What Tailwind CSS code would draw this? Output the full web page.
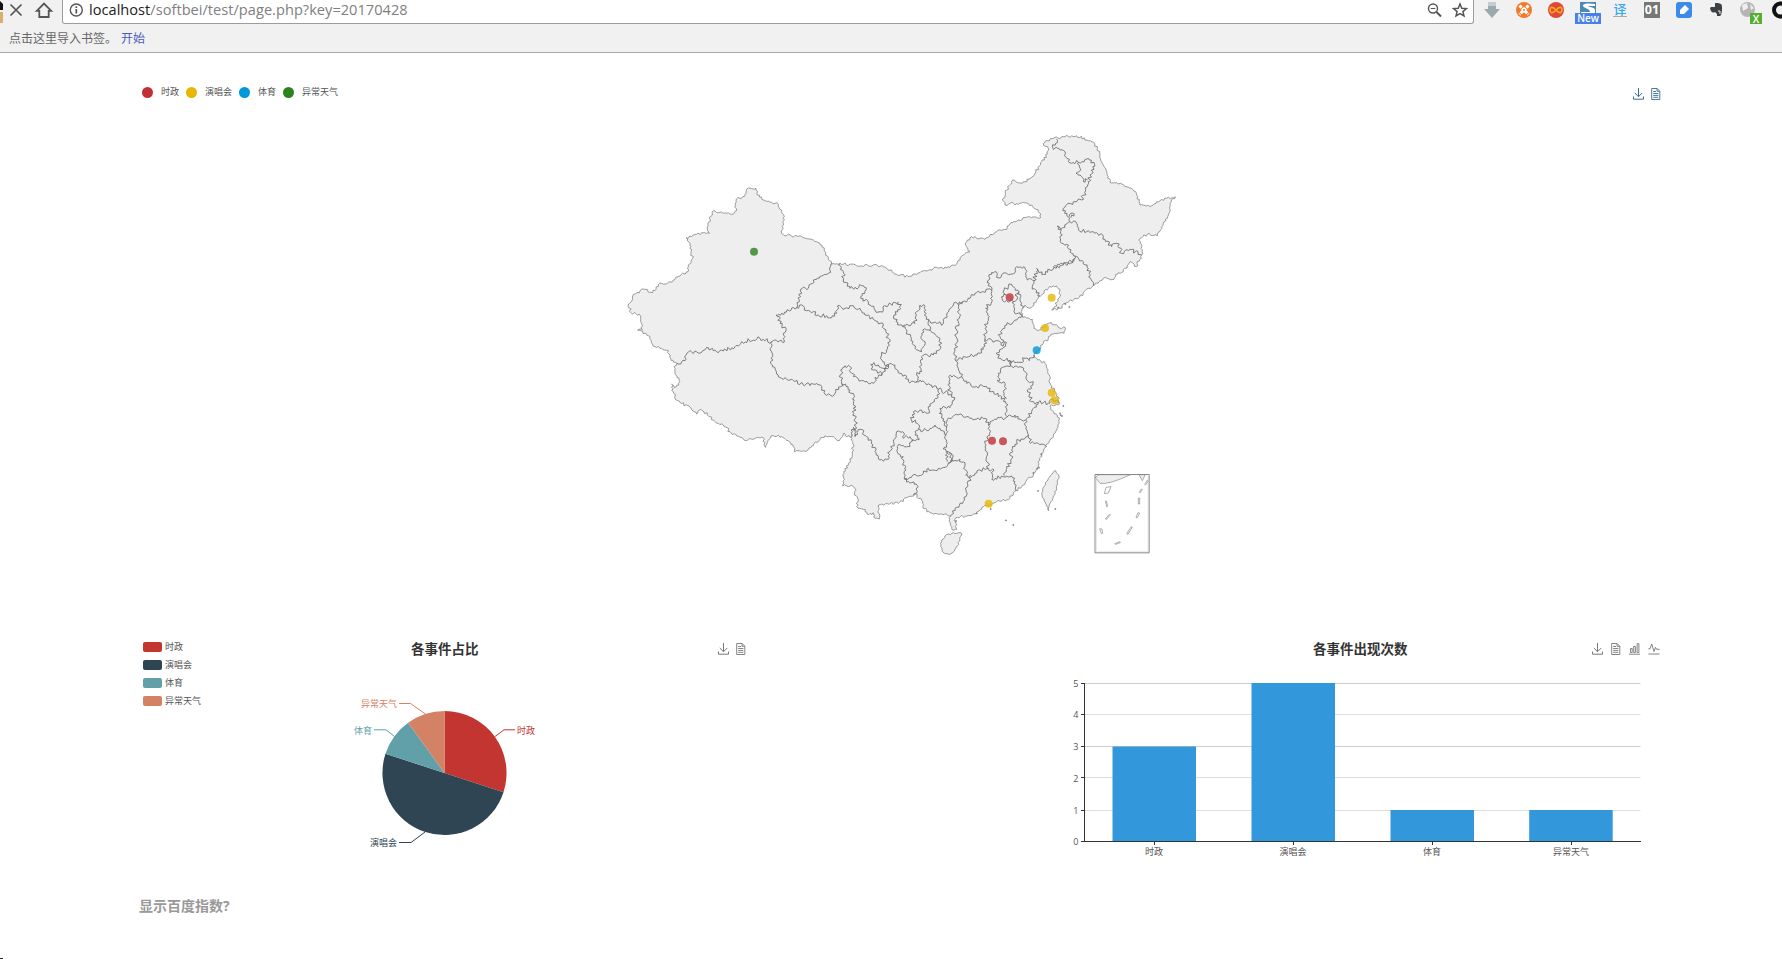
<!DOCTYPE html>
<html lang="zh">
<head>
<meta charset="utf-8">
<title>page.php</title>
<script src="https://cdn.jsdelivr.net/npm/@tailwindcss/browser@4"></script>
</head>
<body class="relative h-[959px] w-[1782px] overflow-hidden bg-white font-['Open_Sans','Noto_Sans_CJK_SC',sans-serif] text-[#333]">
<svg width="0" height="0" class="absolute">
  <defs>
    <symbol id="save" viewBox="0 0 11 12"><path d="M5.500 0V8.500M1.800 5L5.500 8.700L9.200 5M.5 8.500V11.200H10.500V8.500" fill="none" stroke="currentColor"/></symbol>
    <symbol id="doc" viewBox="0 0 10 12"><path d="M.7 .5H6.200L8.800 3.200V11.500H.7ZM6 .7V3.300H8.700M2.200 3.500H5M2.200 5.500H7.400M2.200 7.400H7.400M2.200 9.300H7.400" fill="none" stroke="currentColor" stroke-width=".9"/></symbol>
    <symbol id="bars" viewBox="0 0 11 12"><path d="M1.500 9.500V5.500H3.200V9.500ZM4.700 9.500V3.500H6.400V9.500ZM8.100 9.500V.7H9.900V9.500ZM0 11.200H11" fill="none" stroke="currentColor" stroke-width=".9"/></symbol>
    <symbol id="pulse" viewBox="0 0 12 12"><path d="M.4 5.800H2L3.700 1L6 8.600L7.500 4.300L8.600 6.300H11.600M.4 11H11.600" fill="none" stroke="currentColor" stroke-width=".9"/></symbol>
  </defs>
</svg>

<header class="h-[53px] border-b border-[#aaa] bg-[#f1f1f1]">
  <div class="flex h-6 items-start">
    <svg width="62" height="24" viewBox="0 0 62 24" fill="none">
      <path d="M0 1L3 4V10H0Z" fill="#111"/><path d="M0 12H3V23H0Z" fill="#dcae6c"/>
      <path d="M10.500 4.500L21.500 15.500M21.500 4.500L10.500 15.500" stroke="#555" stroke-width="1.700"/>
      <path d="M36.800 10.800L44 3.500L51.200 10.800H48.700V17H39.300V10.800Z" stroke="#555" stroke-width="1.800"/>
    </svg>
    <div class="flex h-6 w-[1412px] items-start rounded-b-[3px] border-x border-b border-[#9c9c9c] bg-white">
      <svg class="ml-[6px] mt-[3px]" width="15" height="15" viewBox="0 0 15 15" fill="none" stroke="#555"><circle cx="7.300" cy="7" r="6" stroke-width="1.400"/><path d="M7.300 6V10.500M7.300 3.300V5" stroke-width="1.700"/></svg>
      <div class="ml-[5px] -mt-px h-5 whitespace-nowrap text-[14.6px] leading-5 tracking-[0.02px] text-[#808080]"><span class="text-[#222]">localhost</span>/softbei/test/page.php?key=20170428</div>
      <svg class="ml-auto mr-[2px]" width="46" height="20" viewBox="0 0 46 20" fill="none" stroke="#555">
        <circle cx="8" cy="8.500" r="4.500" stroke-width="1.400"/><path d="M11.500 12L16 16.500" stroke-width="2"/><path d="M5.700 8.500H10.300"/>
        <path d="M35 4L36.800 8.300L41.400 8.600L37.900 11.600L39 16L35 13.600L31 16L32.100 11.600L28.600 8.600L33.200 8.300Z" stroke-width="1.500"/>
      </svg>
    </div>
    <svg width="308" height="24" viewBox="1474 0 308 24">
      <path d="M1488 2H1496V9H1500L1492 18L1484 9H1488Z" fill="#9aabb0"/><path d="M1488 2H1496V6H1488Z" fill="#c4ced1"/>
      <circle cx="1524" cy="10" r="8" fill="#f27a2c"/><path d="M1519.500 5.500L1528.500 14.500M1528.500 5.500L1519.500 14.500" stroke="#fff" stroke-width="3" stroke-dasharray="3 1"/><circle cx="1524" cy="10" r="2.500" fill="#fff"/><circle cx="1524" cy="10" r="1" fill="#f27a2c"/>
      <circle cx="1556" cy="10" r="8" fill="#de4838"/><path d="M1556 10C1552 5.500 1550 7.500 1550 10S1552 14.500 1556 10S1562 7.500 1562 10S1560 14.500 1556 10Z" fill="none" stroke="#fba71e" stroke-width="1.700"/>
      <rect x="1580" y="2" width="16" height="12" fill="#4b8ab5"/><path d="M1595 4C1590 3 1583 3 1583 5.500C1583 8.500 1590 8 1590 12H1581V13H1595V10C1595 7 1588 7 1588 6H1595Z" fill="#fff"/>
      <rect x="1575" y="13" width="26" height="11" fill="#4681e8"/><text x="1588" y="22.300" text-anchor="middle" font-size="10" font-weight="600" fill="#fff">New</text>
      <text x="1620" y="14" text-anchor="middle" font-size="13" font-weight="500" fill="#37a7f0">译</text><path d="M1613 16.500H1627" stroke="#aaa"/>
      <rect x="1644" y="2" width="16" height="16" fill="#777"/><text x="1652" y="14" text-anchor="middle" font-size="12.500" font-weight="700" fill="#fff">01</text>
      <rect x="1676" y="2" width="16" height="16" rx="3" fill="#3b8bea"/><path d="M1680 14V10L1685 5L1689 9L1684 14Z" fill="#fff"/>
      <path d="M1714 4L1710 8C1711 13 1713 13 1715 12L1717 14V16H1720C1722 16 1723 5 1721 4L1718 3H1715V7H1711" fill="#3c4144"/><path d="M1718 11H1720V14" stroke="#eee" fill="none"/>
      <circle cx="1747.500" cy="9.500" r="7.500" fill="#b5b5b5"/><path d="M1742 5L1747 3L1748 8L1743 11ZM1750 4L1754 8L1751 10Z" fill="#eee"/>
      <rect x="1750" y="13" width="12" height="11" fill="#55ae32"/><text x="1756" y="22.500" text-anchor="middle" font-size="10.500" font-weight="600" fill="#fff">X</text>
      <circle cx="1780.500" cy="10" r="6.500" fill="none" stroke="#111" stroke-width="4"/>
    </svg>
  </div>
  <div class="flex h-7 items-center gap-[9px] pl-[9px] pt-[2px] text-[12px] leading-4 text-[#666]"><span class="w-[103px] whitespace-nowrap">点击这里导入书签。</span><span class="text-[#4a5dc0]">开始</span></div>
</header>

<main class="px-[139px]">
  <section class="h-[560px]">
    <div class="flex h-[60px] items-start justify-between pl-[3px] pt-8">
      <ul class="flex items-center text-[9px] leading-[14px] text-[#555]">
        <li class="flex w-[44px] items-center gap-[8px]"><i class="size-[11px] rounded-full bg-[#c12e34]"></i>时政</li>
        <li class="flex w-[53px] items-center gap-[8px]"><i class="size-[11px] rounded-full bg-[#e6b600]"></i>演唱会</li>
        <li class="flex w-[44px] items-center gap-[8px]"><i class="size-[11px] rounded-full bg-[#0098d9]"></i>体育</li>
        <li class="flex items-center gap-[8px]"><i class="size-[11px] rounded-full bg-[#2b821d]"></i>异常天气</li>
      </ul>
      <div class="mr-[-18px] mt-[3px] flex gap-[7px] text-[#3c6a91]"><svg width="11" height="12"><use href="#save"/></svg><svg width="10" height="12"><use href="#doc"/></svg></div>
    </div>
    <svg id="map" class="ml-[481px] block" width="560" height="460" viewBox="1860 339 1680 1380" stroke-linejoin="round"></svg>
  </section>

  <section class="flex h-[262px] justify-between">
    <div class="flex w-[610px]">
      <ul class="flex flex-col gap-[4px] pl-[4px] pt-[27px] text-[9px] leading-[14px] text-[#555]">
        <li class="flex items-center gap-[3px]"><i class="h-[10px] w-[19px] rounded-[2px] bg-[#c23531]"></i>时政</li>
        <li class="flex items-center gap-[3px]"><i class="h-[10px] w-[19px] rounded-[2px] bg-[#2f4554]"></i>演唱会</li>
        <li class="flex items-center gap-[3px]"><i class="h-[10px] w-[19px] rounded-[2px] bg-[#61a0a8]"></i>体育</li>
        <li class="flex items-center gap-[3px]"><i class="h-[10px] w-[19px] rounded-[2px] bg-[#d48265]"></i>异常天气</li>
      </ul>
      <div class="ml-auto w-[409px]">
        <div class="flex h-[67px] items-start pl-[71px] pt-[26px]">
          <h2 class="w-[245px] text-[13.5px] font-bold leading-5">各事件占比</h2>
          <div class="mt-[4px] ml-auto mr-[3px] flex gap-[7px] text-[#777]"><svg width="11" height="12"><use href="#save"/></svg><svg width="10" height="12"><use href="#doc"/></svg></div>
        </div>
        <svg class="block" width="409" height="180" viewBox="340 680 409 180" font-size="9">
          <path d="M444.500 773V711A62 62 0 0 1 503.500 792.200Z" fill="#c23531"/>
          <path d="M444.500 773L503.500 792.200A62 62 0 1 1 385.500 753.800Z" fill="#2f4554"/>
          <path d="M444.500 773L385.500 753.800A62 62 0 0 1 408.100 722.800Z" fill="#61a0a8"/>
          <path d="M444.500 773L408.100 722.800A62 62 0 0 1 444.500 711Z" fill="#d48265"/>
          <g fill="none"><path d="M495 736.500L504 729.800H515" stroke="#c23531"/><path d="M425 832L411 842.500H399" stroke="#2f4554"/><path d="M394.500 736.500L386 729.800H374" stroke="#61a0a8"/><path d="M425.500 714L410.500 703.500H399" stroke="#d48265"/></g>
          <text x="517" y="734" fill="#c23531">时政</text><text x="370" y="846" fill="#2f4554">演唱会</text><text x="354" y="734" fill="#61a0a8">体育</text><text x="361" y="706.700" fill="#d48265">异常天气</text>
        </svg>
      </div>
    </div>
    <div class="mr-[-21px] w-[604px]">
      <div class="flex h-[67px] items-start pl-[253px] pt-[26px]">
        <h2 class="text-[13.5px] font-bold leading-5">各事件出现次数</h2>
        <div class="mt-[4px] ml-auto mr-[4px] flex gap-[8px] text-[#777]"><svg width="11" height="12"><use href="#save"/></svg><svg width="10" height="12"><use href="#doc"/></svg><svg width="11" height="12"><use href="#bars"/></svg><svg width="12" height="12"><use href="#pulse"/></svg></div>
      </div>
      <svg class="block overflow-visible" width="604" height="190" viewBox="1060 680 604 190" font-size="9" fill="#555">
        <path d="M1085 683.500H1640.500M1085 746.500H1640.500" stroke="#ccc"/><path d="M1085 714.500H1640.500M1085 777.500H1640.500M1085 810.500H1640.500" stroke="#dedede"/>
        <path d="M1112.500 746.500H1196V841.500H1112.500ZM1251.500 683H1335V841.500H1251.500ZM1390.500 810H1474V841.500H1390.500ZM1529.200 810H1612.700V841.500H1529.200Z" fill="#3398db"/>
        <path d="M1084.500 683V842M1081 683.500H1084M1081 714.500H1084M1081 746.500H1084M1081 777.500H1084M1081 810.500H1084M1081 841.500H1641M1154.500 842V845M1293.500 842V845M1432.500 842V845M1571.500 842V845" stroke="#333" fill="none"/>
        <g text-anchor="end"><text x="1078.500" y="687">5</text><text x="1078.500" y="718">4</text><text x="1078.500" y="750">3</text><text x="1078.500" y="782">2</text><text x="1078.500" y="814">1</text><text x="1078.500" y="845">0</text></g>
        <g text-anchor="middle"><text x="1154" y="855">时政</text><text x="1293" y="855">演唱会</text><text x="1432" y="855">体育</text><text x="1571" y="855">异常天气</text></g>
      </svg>
    </div>
  </section>
  <p class="pt-[21px] text-[14px] font-bold leading-5 text-[#999]">显示百度指数?</p>
</main>
<i class="absolute bottom-0 left-0 h-px w-[3px] bg-[#222]"></i>

<script>
// Map geometry: each piece is [dx, dy, "x,y x,y ..."], in thirds of a pixel.
var W=[1860,510],C=[2460,720],N=[2880,360],S=[2460,1140];
function pts(o,s){return s.trim().split(/\s+/).map(function(p){p=p.split(',');return[+p[0]+o[0],+p[1]+o[1]]})}
function noise(x,y){var v=Math.sin(x*12.9898+y*78.233)*43758.5453;return v-Math.floor(v)-.5}
// Splits long segments into short uneven ones, as a surveyed border has.
function rough(a,amp){
  var d='M'+a[0];
  for(var i=1;i<a.length;i++){
    var p=a[i-1],q=a[i],dx=q[0]-p[0],dy=q[1]-p[1],l=Math.hypot(dx,dy),n=Math.max(1,Math.round(l/5));
    for(var k=1;k<n;k++){var x=p[0]+dx*k/n,y=p[1]+dy*k/n,j=noise(x,y)*amp;d+='L'+(x-dy/l*j).toFixed(1)+','+(y+dx/l*j).toFixed(1)}
    d+='L'+q;
  }
  return d;
}
var north=[].concat(
pts(C,"688,405 675,370 650,355 642,345 655,330 670,310 700,282 732,280 735,262 715,262 695,248 675,255 658,270 642,265 637,238 620,234 603,230"),
pts(N,"187,590 183,578 195,555 210,565 235,535 245,525 265,505 280,497 300,508 302,525 285,550 290,558 275,570 300,565 315,550 355,535 385,505 400,497 430,475 462,478 475,458 490,455 510,425 528,440 545,405 543,385 540,355 562,343 592,348 610,310 625,285 630,250 646,230 620,235 590,245 575,257 540,255 527,215 500,200 470,188 450,187 440,155 430,135 420,105 405,72 385,62 350,47 310,50 270,57 250,70 265,85 262,102 245,125 225,160 215,172 187,190 158,180 140,210 127,240 135,255 150,250 175,253 190,247 215,255 235,275 243,292 205,290 175,300 150,312 140,328 105,337 75,358 35,350 20,365 18,378 30,395 0,413"),
pts(C,"410,72 390,82 340,85 300,98 265,110 230,103 190,80 160,75 110,77 60,70 35,73"));
var outline=[].concat(
pts(W,"635,280 625,262 612,240 606,226 590,215 570,207 545,200 515,198 490,193 484,183 490,165 493,140 485,125 475,103 455,97 430,90 412,75 408,55 385,54 378,70 368,80 350,86 346,100 350,122 335,133 310,130 280,122 270,148 262,172 268,190 245,188 215,200 198,203 210,220 213,245 218,265 205,290 204,305 180,318 160,330 140,342 115,343 105,362 88,367 78,358 60,362 38,378 34,395 26,402 33,428 58,433 62,455 67,478 53,480 75,490 90,500 93,518 105,530 125,535 145,542 152,565 170,580 162,590 165,610 177,630 176,645 163,652 155,643 160,665 168,690 185,700 210,712 230,732 238,720 252,725 270,740 290,760 310,765 330,785 350,798 370,808 400,808 430,803 437,832 447,808 460,797 485,800 505,812 520,830 524,846 560,843 575,828 600,808 615,797 640,800 658,812 670,790 690,802 697,785"),
pts(S,"98,190 97,225 85,250 72,280 68,318 95,315 105,325 103,345 113,355 110,380 130,388 145,405 160,398 165,415 178,417 176,375 200,370 235,370 265,350 285,342 305,360 310,385 330,398 360,402 392,408 388,425 397,450 410,448 408,430 402,422 412,412 440,408 470,400 490,380 510,375 530,365 560,360 580,345 588,332 605,320 620,300 640,285 655,262 658,235 670,215 685,190 697,175 710,150 717,120 712,105 697,92 690,78 715,75 718,55 705,35 690,10"),
north);
var inner=[
[W,"170,580 195,572 205,547 245,547 265,533 280,542 310,543 345,530 365,515 420,505 455,515 493,516 490,490 498,482 480,460 478,440 468,435 485,430 530,412 538,390 542,358 565,355 580,330 605,318 625,310 635,280"],
[W,"455,515 450,540 458,560 457,590 470,612 485,625 520,632 570,647 590,640 605,650 612,668 630,675 645,670 662,650 665,640"],
[W,"530,412 550,408 560,422 580,425 590,437 620,437 635,443 650,430 652,408 675,415 695,407"],
[C,"95,197 120,205 135,225 160,238 190,255 200,280 210,305 200,330 185,345 188,365 205,380 190,385 175,375 152,373 160,390 185,400 175,410 165,412 165,425 150,432 130,422 100,410 90,380 75,377 62,390 65,430 90,450 103,480 102,520 108,560 105,575"],
[C,"57,70 70,95 70,120 90,145 130,137 138,150 122,170 150,195 165,210 180,215 205,195 235,187 242,205 222,225 228,245 248,260 285,250 290,215 300,195 315,200 313,225 325,245 330,270 308,270 303,290 315,305 305,335 285,325 272,290 248,260"],
[C,"330,270 360,295 362,325 340,345 308,347 303,370 305,395 290,405 288,427"],
[C,"325,240 350,250 370,250 380,225 400,195 428,185 415,205 418,235 410,270 408,310 405,355 415,385 425,410 386,410 390,430 383,450 395,465 403,480 390,503 360,505 358,520 375,545 380,560"],
[C,"428,185 450,175 465,160 490,155 515,150 517,180 497,205 505,235 495,265 495,298 525,303 543,308"],
[C,"515,150 505,120 515,97 528,95 530,112 545,105 560,100 585,98 590,80 612,80 618,105 622,120 642,122 637,140 650,152 660,168"],
[C,"642,122 650,85 665,103 690,90 730,75 765,60"],
[C,"565,140 575,133 585,145 597,155 585,165 590,180 570,185 548,182 545,170 558,165 552,150 565,140"],
[C,"597,155 600,175 605,190 607,205"],[C,"582,183 582,215 600,218 607,230"],
[C,"603,232 585,240 560,255 542,275 540,290 550,300 543,315 560,308 528,340 540,355 570,362 600,367 615,355 628,362 642,345"],
[C,"408,360 440,352 465,345 490,328 497,298"],
[C,"565,362 575,378 600,380 615,395 620,420 640,425 635,445 622,450 635,485 655,487 690,490 700,478 715,490"],
[C,"575,365 570,380 548,382 535,400 540,420 532,420 555,430 552,460 560,475"],
[C,"425,410 440,430 470,440 500,440 515,455 545,470 557,485 562,530"],
[C,"185,405 190,395 205,375 225,375 240,400 255,405 265,425 285,427 300,420 330,435 355,447 395,465"],
[S,"355,27 352,55 335,70 322,100 285,92 275,120 292,130 295,148 310,152 335,145 345,135 360,145 378,165 380,125"],
[S,"505,135 530,118 560,112 585,105 600,117 617,120 635,95 655,67"],
[S,"617,120 625,165 632,190 655,190 680,200"],[S,"625,165 590,185 575,210 572,240 560,265 553,287"],
[S,"380,125 410,103 440,110 470,117 495,115 505,135 510,165 495,190 502,225 505,265 475,270 455,290 437,285 435,255 420,237 400,243"],
[S,"378,165 382,190 370,207 385,215 395,235 385,250"],[S,"382,245 380,215 392,220 400,243"],
[S,"400,243 375,262 355,265 340,270 325,265 310,280 285,283 265,297 253,297 258,270 248,255 250,230 235,222 232,200 250,197 270,200 275,185"],
[S,"97,155 100,142 108,155 105,170 122,148 140,170 155,185 165,215 180,240 205,238 212,200 222,190 228,165 235,153 248,155 250,175 270,170 275,185 297,180 285,165 285,155 295,150"],
[S,"253,297 275,308 295,320 292,335 280,345"],[S,"455,290 443,320 438,350 420,370 405,385 392,408"],
[S,"505,265 522,270 515,297 550,290 575,288 585,305 588,332"],
[N,"290,57 292,68 278,82 300,90 315,95 325,125 355,127 385,115 405,138 390,165 382,200 365,240 345,245 310,265 325,290 330,305 350,310 355,330 400,335 430,350 455,380 470,370 485,400 510,388 545,405"],
[N,"355,127 357,155 348,160 360,165 370,185 383,180"],[N,"328,290 332,280 342,288 333,293"],
[N,"330,305 315,322 292,318 302,335 305,370 325,375 335,400 345,408 370,425 385,445 392,475 400,497"],[N,"345,408 340,422 280,440"]];
var islands=[[S,"365,485 375,468 400,458 425,460 420,480 408,505 388,525 368,515 362,500 365,485"],
[S,"707,272 716,285 710,325 700,350 690,370 686,392 680,375 667,350 668,330 685,295 707,272"]];
var h='<path fill="#eee" stroke="#888" stroke-width="2.500" d="'+rough(outline,8)+'Z"/>';
h+='<path fill="none" stroke="#6b6b6b" stroke-width="2.600" d="'+inner.map(function(a){return rough(pts(a[0],a[1]),12)}).join('')+'"/>';
h+='<path fill="#eee" stroke="#888" stroke-width="2.500" d="'+islands.map(function(a){return rough(pts(a[0],a[1]),5)}).join('')+'"/>';
// Small islets off the coast
[[3175,923],[3196,912],[3208,921],[3190,1218],[3182,1245],[3186,1248],[3180,1240],[3114,1473],[3166,1527],[3018,1561],[3040,1575],[2972,1527],[3117,1403],[3112,1406],[3100,1419],[3124,1363],[2868,1563],[2930,1540]].forEach(function(p){h+='<circle cx="'+p[0]+'" cy="'+p[1]+'" r="2" fill="#888" stroke="#555"/>'});
// South China Sea inset
h+='<g transform="translate(3060 1140)" stroke="#888" stroke-width="2" fill="none"><path d="M226 292L237 284H332Q265 315 240 310Z" fill="#eee"/><path d="M357 284L367 302L376 284Z" fill="#eee"/><path d="M225 283.500H387.500V518.500H225Z" stroke-width="3"/><path d="M229.500 290V515H384V290" stroke-width="1" stroke="#bbb"/>'
+'<path d="M258 322L273 320L265 339L253 341ZM256 364L260 380L263 379L259 363ZM256 417L268 403L271 404L260 418ZM239 446L246 447L248 460L244 461ZM284 491L300 485L301 488L287 493ZM320 461L333 441L337 441L324 463ZM348 412L354 398L359 399L352 413ZM355 354H359V372H355ZM358 337L364 327L367 328L361 338ZM374 313L382 301L384 304L377 315Z"/></g>';
// Event markers
[[2262,755,'#2b821d'],[3029,892,'#c12e34'],[3155,893,'#e6b600'],[3135,984,'#e6b600'],[3110,1051,'#0098d9'],[3155,1178,'#e6b600'],[3164,1201,'#e6b600'],[2976,1322,'#c12e34'],[3009,1324,'#c12e34'],[2966,1511,'#e6b600']].forEach(function(p){h+='<circle cx="'+p[0]+'" cy="'+p[1]+'" r="12" fill="'+p[2]+'" fill-opacity=".8"/>'});
document.getElementById('map').innerHTML=h;
</script>
</body>
</html>
